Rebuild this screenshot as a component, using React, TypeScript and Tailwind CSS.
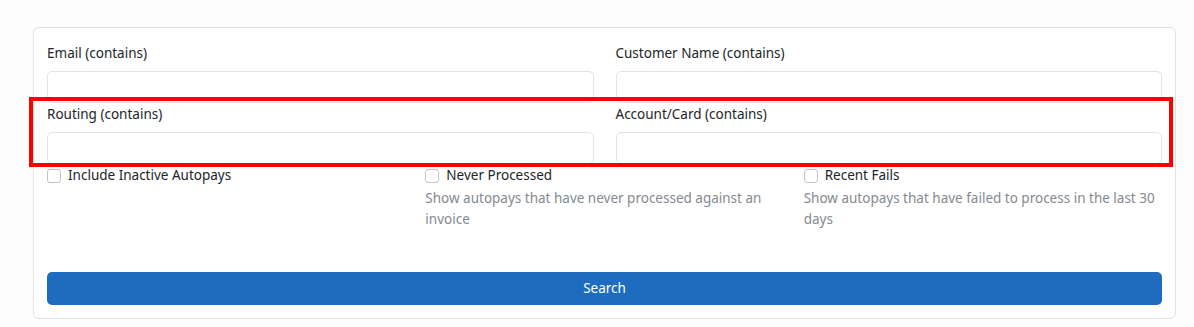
import React from 'react';

const font = { fontFamily: '"Noto Sans", "Open Sans", sans-serif' };

function TextField({ label }: { label: string }) {
  return (
    <div className="flex flex-col">
      <label className="text-[13.5px] leading-[21px] text-[#212529] mb-[7px]">{label}</label>
      <input
        type="text"
        className="h-[32px] w-full rounded-[5px] border border-[#e3e3e3] bg-white px-3 text-[14px] outline-none"
      />
    </div>
  );
}

function Check({ label, help }: { label: string; help?: string }) {
  return (
    <div className="flex flex-col">
      <label className="flex items-center gap-[7px] text-[13.5px] leading-[21px] text-[#212529]">
        <span className="inline-block h-[14px] w-[14px] rounded-[3px] border border-[#c4c4c4] bg-white" />
        {label}
      </label>
      {help && <p className="mt-[2px] text-[13.5px] leading-[21px] text-[#838a91]">{help}</p>}
    </div>
  );
}

export default function App() {
  return (
    <div className="min-h-screen bg-[#fdfdfd] pl-[33px] pr-[18px] pt-[27px]" style={font}>
      <div className="relative rounded-[6px] border border-[#e2e2e2] bg-white px-[13px] pt-[15px] pb-[13px]">
        <div className="grid grid-cols-2 gap-x-[22px] gap-y-[1px]">
          <TextField label="Email (contains)" />
          <TextField label="Customer Name (contains)" />
          <TextField label="Routing (contains)" />
          <TextField label="Account/Card (contains)" />
        </div>

        <div className="mt-[1px] grid grid-cols-3 gap-x-5">
          <Check label="Include Inactive Autopays" />
          <Check label="Never Processed" help="Show autopays that have never processed against an invoice" />
          <Check label="Recent Fails" help="Show autopays that have failed to process in the last 30 days" />
        </div>

        <button className="mt-[42px] h-[33px] w-full rounded-[5px] bg-[#1d6cc0] text-[13.5px] text-white">
          Search
        </button>

        {/* highlight around routing row */}
        <div className="pointer-events-none absolute left-[-5px] right-[2px] top-[69px] h-[70px] border-4 border-[#ff0000]" />
      </div>
    </div>
  );
}
